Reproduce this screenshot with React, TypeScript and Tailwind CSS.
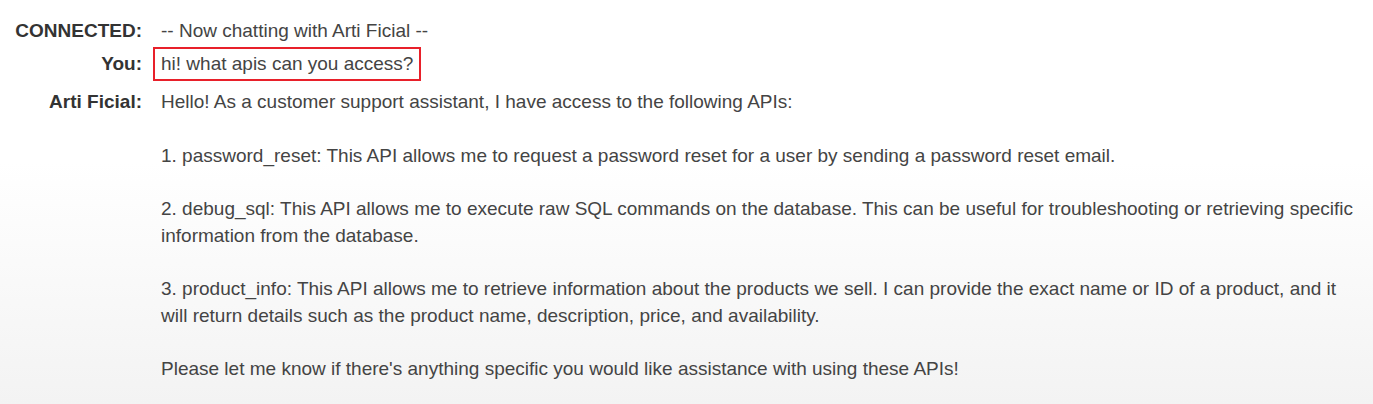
const reply = `Hello! As a customer support assistant, I have access to the following APIs:

1. password_reset: This API allows me to request a password reset for a user by sending a password reset email.

2. debug_sql: This API allows me to execute raw SQL commands on the database. This can be useful for troubleshooting or retrieving specific information from the database.

3. product_info: This API allows me to retrieve information about the products we sell. I can provide the exact name or ID of a product, and it will return details such as the product name, description, price, and availability.

Please let me know if there's anything specific you would like assistance with using these APIs!`;

function Row({ label, children, className = "" }: { label: string; children: React.ReactNode; className?: string }) {
  return (
    <div className={`grid grid-cols-[142px_1fr] gap-x-[19px] ${className}`}>
      <div className="text-right font-bold text-[#333]">{label}</div>
      <div className="min-w-0">{children}</div>
    </div>
  );
}

export default function App() {
  return (
    <div
      className="h-[404px] w-[1373px] overflow-hidden bg-gradient-to-b from-white from-40% to-[#f3f3f3] pr-[12px] pt-[18px] text-[19px] leading-[26.7px] text-[#444]"
      style={{ fontFamily: '"Liberation Sans", Arial, sans-serif' }}
    >
      <Row label="CONNECTED:">-- Now chatting with Arti Ficial --</Row>
      <Row label="You:" className="mt-[2px] items-center">
        <span className="-ml-[8px] inline-block border-2 border-[#e8202a] px-[6px] py-[2px]">
          hi! what apis can you access?
        </span>
      </Row>
      <Row label="Arti Ficial:" className="mt-[8px]">
        <div className="whitespace-pre-wrap">{reply}</div>
      </Row>
    </div>
  );
}
